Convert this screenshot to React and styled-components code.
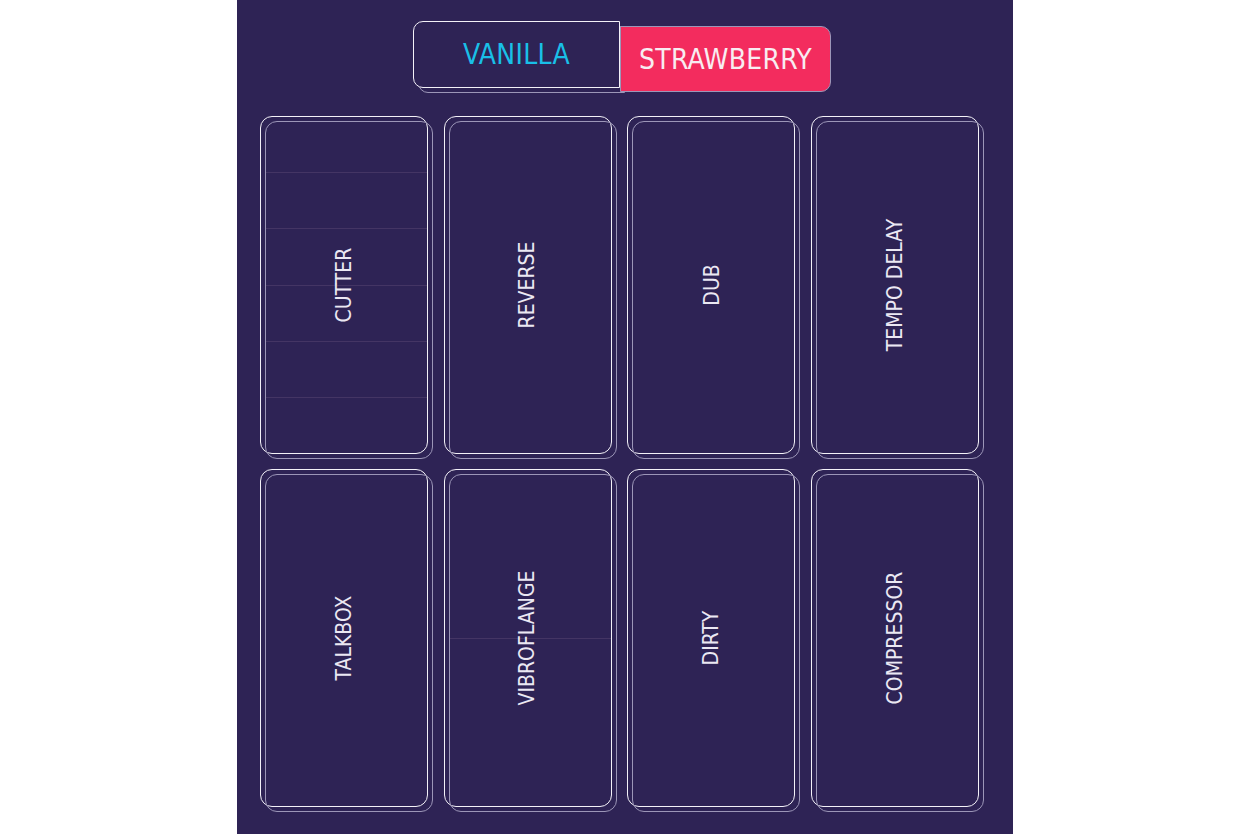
import React, { useState } from 'react'
import styled, { createGlobalStyle, css } from 'styled-components'

const GlobalStyle = createGlobalStyle`
  html, body {
    margin: 0;
    padding: 0;
    background: #ffffff;
  }
  * {
    box-sizing: border-box;
  }
`

const FONT = `"DejaVu Sans Condensed", "DejaVu Sans", "Liberation Sans", sans-serif`

const pads = [
  { name: 'CUTTER', segments: 6 },
  { name: 'REVERSE', segments: 1 },
  { name: 'DUB', segments: 1 },
  { name: 'TEMPO DELAY', segments: 1 },
  { name: 'TALKBOX', segments: 1 },
  { name: 'VIBROFLANGE', segments: 2 },
  { name: 'DIRTY', segments: 1 },
  { name: 'COMPRESSOR', segments: 1 },
]

const App = () => {
  const [flavour, setFlavour] = useState('strawberry')

  return (
    <>
      <GlobalStyle />
      <Panel>
        <SwitchRow>
          <Option
            $side="left"
            $active={flavour === 'vanilla'}
            $width={207}
            onClick={() => setFlavour('vanilla')}
          >
            VANILLA
          </Option>
          <Option
            $side="right"
            $active={flavour === 'strawberry'}
            $width={211}
            onClick={() => setFlavour('strawberry')}
          >
            STRAWBERRY
          </Option>
        </SwitchRow>
        <PadGrid>
          {pads.map(pad => (
            <Pad key={pad.name}>
              <Segments>
                {Array.from({ length: pad.segments }).map((_, i) => (
                  <Segment key={i} $first={i === 0} />
                ))}
              </Segments>
              <Label>{pad.name}</Label>
            </Pad>
          ))}
        </PadGrid>
      </Panel>
    </>
  )
}

const Panel = styled.main`
  width: 776px;
  height: 834px;
  margin-left: 237px;
  background: #2e2355;
  display: flex;
  flex-direction: column;
  overflow: hidden;
`

const SwitchRow = styled.div`
  position: relative;
  isolation: isolate;
  display: flex;
  justify-content: center;
  align-items: flex-start;
  margin-top: 21px;
  padding-right: 6px;
`

const raised = css`
  height: 67px;
  color: #19bfe7;
  background: #2e2355;
  border: 1.5px solid #f3f1f8;
  &::after {
    content: '';
    position: absolute;
    left: 4px;
    top: 4px;
    right: -6px;
    bottom: -6px;
    border: 1.5px solid #9c96b8;
    border-radius: inherit;
    z-index: -1;
    pointer-events: none;
  }
`

const pressed = css`
  height: 66px;
  margin-top: 5px;
  color: #f8ecf1;
  background: #f32c5e;
  border: 1.5px solid #9c96b8;
`

const Option = styled.button`
  position: relative;
  width: ${p => p.$width}px;
  display: flex;
  align-items: center;
  justify-content: center;
  padding: 0;
  font-family: ${FONT};
  font-size: 28px;
  letter-spacing: 0.3px;
  cursor: pointer;
  border-radius: ${p => (p.$side === 'left' ? '10px 0 0 10px' : '0 10px 10px 0')};
  ${p => (p.$active ? pressed : raised)}
`

const PadGrid = styled.div`
  display: grid;
  grid-template-columns: repeat(4, 168px);
  grid-auto-rows: 338px;
  column-gap: 15.7px;
  row-gap: 15px;
  margin-top: 24px;
  margin-left: 23px;
`

const Pad = styled.div`
  position: relative;
  display: flex;
  align-items: center;
  justify-content: center;
  border: 1.5px solid #f3f1f8;
  border-radius: 12px;
  &::after {
    content: '';
    position: absolute;
    left: 4px;
    top: 4px;
    right: -6px;
    bottom: -6px;
    border: 1.5px solid #9c96b8;
    border-radius: 12px;
    pointer-events: none;
  }
`

const Segments = styled.div`
  position: absolute;
  top: 0;
  bottom: 0;
  left: 5px;
  right: 0;
  display: flex;
  flex-direction: column;
  pointer-events: none;
`

const Segment = styled.div`
  flex: 1;
  border-top: ${p => (p.$first ? 'none' : '1px solid rgba(110, 90, 130, 0.35)')};
`

const Label = styled.span`
  position: relative;
  transform: rotate(-90deg);
  white-space: nowrap;
  font-family: ${FONT};
  font-size: 21px;
  color: #ebe8f3;
`

export default App
